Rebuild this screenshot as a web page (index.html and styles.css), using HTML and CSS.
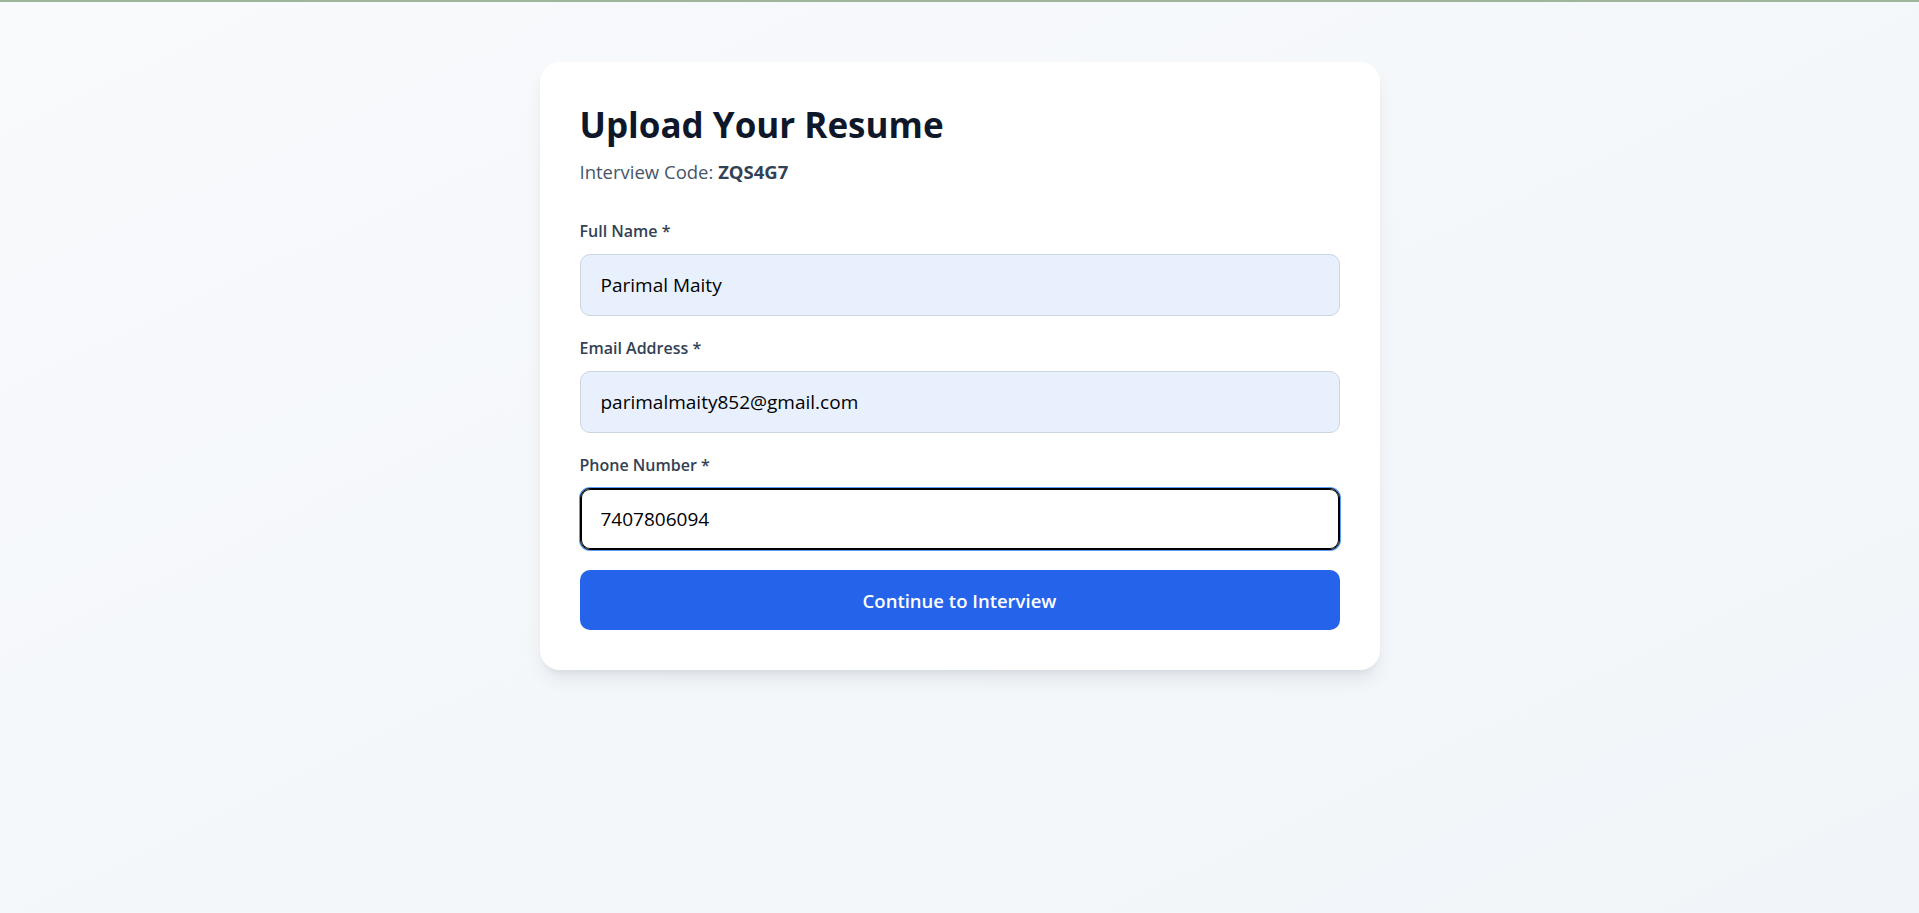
FILE: index.html
```html
<!DOCTYPE html>
<html lang="en">
<head>
<meta charset="utf-8">
<title>Upload Your Resume</title>
<link rel="stylesheet" href="styles.css">
</head>
<body>
<div class="topline"></div>
<main class="page">
  <section class="card">
    <header class="card-head">
      <h1 class="title">Upload Your Resume</h1>
      <p class="subtitle">Interview Code: <strong class="code">ZQS4G7</strong></p>
    </header>
    <form class="form">
      <div class="field">
        <label class="label" for="name">Full Name *</label>
        <input class="input autofill" id="name" type="text" value="Parimal Maity">
      </div>
      <div class="field">
        <label class="label" for="email">Email Address *</label>
        <input class="input autofill" id="email" type="email" value="parimalmaity852@gmail.com">
      </div>
      <div class="field">
        <label class="label" for="phone">Phone Number *</label>
        <input class="input focused" id="phone" type="tel" value="7407806094">
      </div>
      <button class="btn" type="button">Continue to Interview</button>
    </form>
  </section>
</main>
</body>
</html>
```
FILE: styles.css
```css
* { box-sizing: border-box; }
html, body { margin: 0; padding: 0; }
body {
  min-height: 913px;
  font-family: "Open Sans", "Noto Sans", "Liberation Sans", sans-serif;
  background: linear-gradient(to bottom right, #f8fafc, #f1f5f9);
  color: #0f172a;
}
.topline { height: 2px; background: #9db59b; }
.page {
  display: flex;
  justify-content: center;
  padding-top: 60px;
}
.card {
  width: 840px;
  background: #fff;
  border-radius: 20px;
  padding: 40px;
  box-shadow: 0 12px 20px -4px rgba(15, 23, 42, 0.09), 0 5px 8px -5px rgba(15, 23, 42, 0.09);
}
.card-head { margin-bottom: 32px; }
.title {
  margin: 0;
  font-size: 35px;
  line-height: 45px;
  font-weight: 700;
  color: #0f172a;
}
.subtitle {
  margin: 10px 0 0;
  font-size: 18.5px;
  line-height: 30px;
  color: #475569;
}
.code { font-weight: 700; color: #334155; }
.form { display: flex; flex-direction: column; gap: 20px; }
.field { display: flex; flex-direction: column; gap: 10px; }
.label {
  font-size: 16px;
  line-height: 25px;
  font-weight: 600;
  color: #334155;
}
.input {
  height: 62px;
  width: 100%;
  padding: 0 20px;
  border: 1px solid #cbd5e1;
  border-radius: 10px;
  font-family: inherit;
  font-size: 19px;
  color: #000;
  background: #fff;
  outline: none;
}
.input.autofill { background: #e8f0fe; }
.input.focused {
  border-color: #000;
  box-shadow: inset 0 0 0 1px #000, 0 0 0 1px #5b9cf6;
}
.btn {
  height: 60px;
  width: 100%;
  border: none;
  border-radius: 10px;
  background: #2563eb;
  color: #fff;
  font-family: inherit;
  font-size: 18.5px;
  font-weight: 600;
  cursor: pointer;
}
```
